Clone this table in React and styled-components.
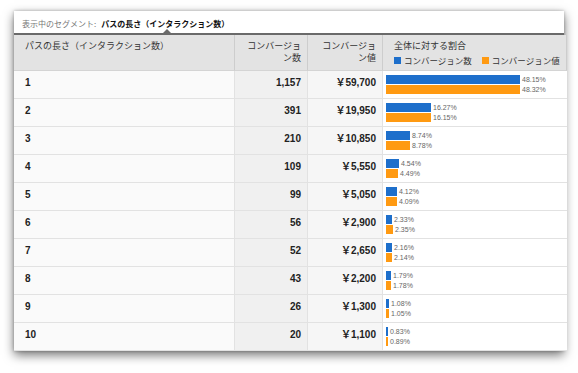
import React from "react";
import styled, { createGlobalStyle } from "styled-components";

const Global = createGlobalStyle`
  html, body { margin: 0; padding: 0; background: #fff; }
  body { font-family: "Liberation Sans", "Noto Sans CJK JP", sans-serif; }
`;

const Page = styled.div`
  width: 578px;
  height: 373px;
  padding: 11px 0 0 14px;
  box-sizing: border-box;
`;

const Window = styled.div`
  width: 550px;
  background: #fff;
  box-shadow: 0 4px 10px rgba(0, 0, 0, 0.55), 0 0 3px rgba(0, 0, 0, 0.25);
`;

const SegmentBar = styled.div`
  position: relative;
  height: 24px;
  display: flex;
  align-items: center;
  padding: 2px 8px 0;
  box-sizing: border-box;
  border-bottom: 2px solid #6a6a6a;
  font-family: "Noto Sans CJK JP", sans-serif;
  font-size: 8px;
  color: #777;
`;

const SegmentValue = styled.span`
  font-weight: bold;
  color: #111;
  margin-left: 5px;
`;

const Notch = styled.span`
  position: absolute;
  left: 149px;
  bottom: 0;
  width: 0;
  height: 0;
  border-left: 4px solid transparent;
  border-right: 4px solid transparent;
  border-bottom: 4px solid #6a6a6a;
`;

const Table = styled.div`
  display: grid;
  grid-template-columns: 221px 73px 75px 1fr;
`;

const HeadCell = styled.div`
  height: 36px;
  box-sizing: border-box;
  background: #e3e3e3;
  border-right: 1px solid #cdcdcd;
  border-bottom: 1px solid #d4d4d4;
  padding: 5px 6px 0 ${(p) => (p.$right ? "6px" : "11px")};
  text-align: ${(p) => (p.$right ? "right" : "left")};
  font-family: "Noto Sans CJK JP", sans-serif;
  font-size: 9px;
  line-height: 12px;
  color: #333;
  white-space: nowrap;
  &:last-child { border-right: none; padding-left: 4px; }
`;

const Legend = styled.div`
  display: flex;
  align-items: center;
  gap: 3px;
  margin-top: 2px;
  font-size: 8.5px;
  white-space: nowrap;
`;

const Swatch = styled.span`
  flex: none;
  width: 7px;
  height: 7px;
  background: ${(p) => p.$color};
  margin-left: ${(p) => (p.$gap ? "7px" : "0")};
`;

const Cell = styled.div`
  height: 28px;
  box-sizing: border-box;
  border-bottom: 1px solid #e2e2e2;
  border-right: 1px solid #e2e2e2;
  background: ${(p) => p.$bg};
  padding: 6px ${(p) => (p.$right ? "6px" : "0")} 0 ${(p) => (p.$right ? "0" : "11px")};
  text-align: ${(p) => (p.$right ? "right" : "left")};
  font-family: "Liberation Sans", "Noto Sans CJK JP", sans-serif;
  font-weight: bold;
  font-size: 10px;
  line-height: 12px;
  color: #222;
`;

const ChartCell = styled.div`
  height: 28px;
  box-sizing: border-box;
  border-bottom: 1px solid #e2e2e2;
  background: #fff;
  padding: 4px 0 0 3px;
  display: flex;
  flex-direction: column;
  gap: 1px;
`;

const BarLine = styled.div`
  display: flex;
  align-items: center;
  height: 9px;
`;

const Bar = styled.span`
  height: 9px;
  background: ${(p) => p.$color};
  flex: none;
`;

const Pct = styled.span`
  margin-left: 2px;
  font-family: "Liberation Sans", sans-serif;
  font-size: 7px;
  color: #666;
`;

const BLUE = "#1e6fcb";
const ORANGE = "#ff9a12";
const SCALE = 2.78;

const rows = [
  ["1", "1,157", "59,700", 48.15, 48.32],
  ["2", "391", "19,950", 16.27, 16.15],
  ["3", "210", "10,850", 8.74, 8.78],
  ["4", "109", "5,550", 4.54, 4.49],
  ["5", "99", "5,050", 4.12, 4.09],
  ["6", "56", "2,900", 2.33, 2.35],
  ["7", "52", "2,650", 2.16, 2.14],
  ["8", "43", "2,200", 1.79, 1.78],
  ["9", "26", "1,300", 1.08, 1.05],
  ["10", "20", "1,100", 0.83, 0.89],
];

const w = (p) => Math.max(2, Math.round(p * SCALE));

export default function App() {
  return (
    <Page>
      <Global />
      <Window>
        <SegmentBar>
          表示中のセグメント:
          <SegmentValue>パスの長さ（インタラクション数）</SegmentValue>
          <Notch />
        </SegmentBar>
        <Table>
          <HeadCell>パスの長さ（インタラクション数）</HeadCell>
          <HeadCell $right>
            コンバージョ
            <br />ン数
          </HeadCell>
          <HeadCell $right>
            コンバージョ
            <br />ン値
          </HeadCell>
          <HeadCell>
            全体に対する割合
            <Legend>
              <Swatch $color={BLUE} />
              コンバージョン数
              <Swatch $color={ORANGE} $gap />
              コンバージョン値
            </Legend>
          </HeadCell>
          {rows.map(([len, cnt, val, a, b]) => (
            <React.Fragment key={len}>
              <Cell $bg="#fafafa">{len}</Cell>
              <Cell $bg="#f0f0f0" $right>
                {cnt}
              </Cell>
              <Cell $bg="#f6f6f6" $right>
                ￥{val}
              </Cell>
              <ChartCell>
                <BarLine>
                  <Bar $color={BLUE} style={{ width: w(a) }} />
                  <Pct>{a.toFixed(2)}%</Pct>
                </BarLine>
                <BarLine>
                  <Bar $color={ORANGE} style={{ width: w(b) }} />
                  <Pct>{b.toFixed(2)}%</Pct>
                </BarLine>
              </ChartCell>
            </React.Fragment>
          ))}
        </Table>
      </Window>
    </Page>
  );
}
